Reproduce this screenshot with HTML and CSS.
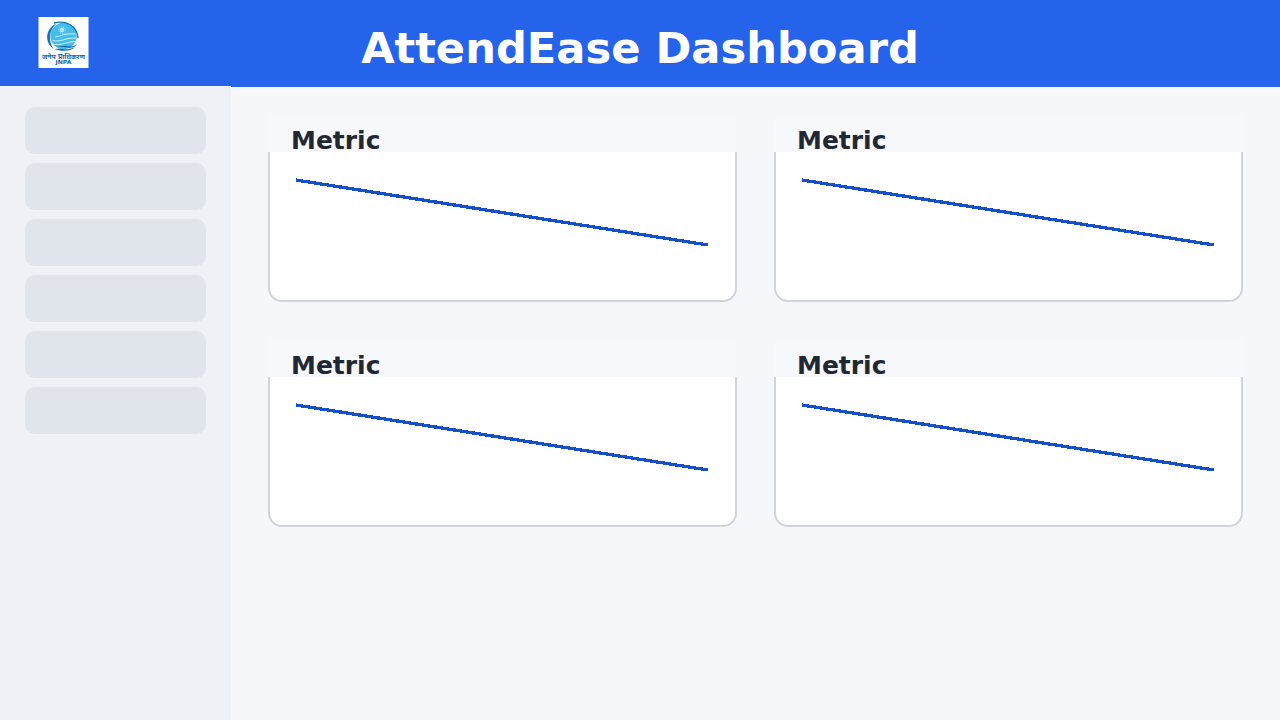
FILE: index.html
```html
<!DOCTYPE html>
<html lang="en">
<head>
<meta charset="utf-8">
<title>AttendEase Dashboard</title>
<link rel="stylesheet" href="styles.css">
</head>
<body>
<header class="topbar">
  <svg class="logo" viewBox="-0.500 0 51 51" width="51" height="51">
    <rect width="50" height="51" fill="#fff"/>
    <circle cx="25" cy="19" r="13.200" fill="#42bdec"/>
    <circle cx="23.500" cy="13" r="2.200" fill="#bdeafa"/>
    <circle cx="23.500" cy="13" r="3.200" fill="none" stroke="#bdeafa" stroke-width="1" stroke-dasharray="1 1"/>
    <path d="M17 20c5-1 10-4 20-3M14 23.500c9 2 12-3 24-2.500M14 27c9 2 14-2.500 24-2.500" fill="none" stroke="#d3f1fc" stroke-width="1"/>
    <path d="M18 6.500C7 11 5.500 25 15 32c-5-8-5.500-18 3-25.500z" fill="#1671b5"/>
    <path d="M15.500 6c11-3 23 2 24 15" fill="none" stroke="#1671b5" stroke-width="1.300"/>
    <path d="M12 27c7 4 11 1 16 2s8 0 11-2c-2 3-6 4.500-10 3.500s-10 0-17-3.500zM16 32c6-1 10 1 14 0s5-1 7-2c-4 4-13 5-21 2z" fill="#1268ac"/>
    <text class="logo-name" x="25" y="42" text-anchor="middle" textLength="43" lengthAdjust="spacingAndGlyphs">जनेप प्राधिकरण</text>
    <text class="logo-code" x="25" y="47.300" text-anchor="middle" textLength="16" lengthAdjust="spacingAndGlyphs">JNPA</text>
  </svg>
  <h1 class="title">AttendEase Dashboard</h1>
</header>
<div class="body">
  <nav class="sidebar">
    <div class="item"></div><div class="item"></div><div class="item"></div>
    <div class="item"></div><div class="item"></div><div class="item"></div>
  </nav>
  <main class="grid">
    <section class="card"><h2 class="card-head">Metric</h2><div class="card-body"><svg class="chart" viewBox="0 0 412 70"><path d="M0 4L412 69"/></svg></div></section>
    <section class="card"><h2 class="card-head">Metric</h2><div class="card-body"><svg class="chart" viewBox="0 0 412 70"><path d="M0 4L412 69"/></svg></div></section>
    <section class="card"><h2 class="card-head">Metric</h2><div class="card-body"><svg class="chart" viewBox="0 0 412 70"><path d="M0 4L412 69"/></svg></div></section>
    <section class="card"><h2 class="card-head">Metric</h2><div class="card-body"><svg class="chart" viewBox="0 0 412 70"><path d="M0 4L412 69"/></svg></div></section>
  </main>
</div>
</body>
</html>
```
FILE: styles.css
```css
* { box-sizing: border-box; }
body {
  margin: 0;
  height: 720px;
  overflow: hidden;
  background: #f5f7fb;
  font-family: "DejaVu Sans", sans-serif;
  display: flex;
  flex-direction: column;
}
.topbar {
  height: 87px;
  flex: none;
  background: #2563eb;
  display: grid;
  grid-template-columns: 89px 1fr 89px;
}
.logo { margin: 17px 0 0 38px; }
.logo-name { font: bold 7px "DejaVu Sans", "Noto Sans", sans-serif; fill: #1268ac; }
.logo-code { font: bold 5.500px "DejaVu Sans", sans-serif; fill: #1268ac; }
.title {
  margin: 0;
  padding-top: 23px;
  text-align: center;
  white-space: nowrap;
  color: #fff;
  font-size: 43.200px;
  line-height: 50px;
}
.body { display: flex; flex: 1; }
.sidebar {
  width: 231px;
  flex: none;
  margin-top: -1px;
  padding: 21px 25px;
  background: #eef1f6;
  display: flex;
  flex-direction: column;
  gap: 9px;
}
.item { height: 47px; border-radius: 10px; background: #e0e4eb; }
.grid {
  padding: 27px 0 0 37px;
  display: grid;
  grid-template-columns: 469px 469px;
  grid-auto-rows: 188px;
  gap: 37px;
  align-content: start;
}
.card { display: flex; flex-direction: column; }
.card-head {
  margin: 0;
  height: 38px;
  padding: 12px 0 0 23px;
  background: #f6f8fc;
  color: #212833;
  font-size: 25px;
  line-height: 30px;
}
.card-body {
  flex: 1;
  padding: 24px 26px;
  background: #fff;
  border: 2px solid #d0d4db;
  border-top: 0;
  border-radius: 0 0 14px 14px;
}
.chart { display: block; width: 412px; height: 70px; }
.chart path { stroke: #1450c8; stroke-width: 3.300; fill: none; shape-rendering: crispEdges; }
```
